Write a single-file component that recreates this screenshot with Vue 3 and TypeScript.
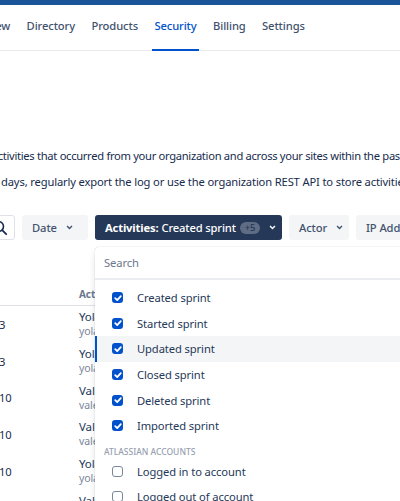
<script setup lang="ts">
const tabs = ['Overview', 'Directory', 'Products', 'Security', 'Billing', 'Settings']
const rows = [
  { date: '3', name: 'Yolanda', mail: 'yolanda@example' },
  { date: '3', name: 'Yolanda', mail: 'yolanda@example' },
  { date: '10', name: 'Valerie', mail: 'valerie@example' },
  { date: '10', name: 'Valerie', mail: 'valerie@example' },
  { date: '10', name: 'Yolanda', mail: 'yolanda@example' },
  { date: '10', name: 'Valerie', mail: 'valerie@example' },
]
const sprintItems = ['Created sprint', 'Started sprint', 'Updated sprint', 'Closed sprint', 'Deleted sprint', 'Imported sprint']
const accountItems = ['Logged in to account', 'Logged out of account']
</script>

<template>
  <div class="page">
    <div class="topbar"></div>
    <nav class="tabs">
      <a v-for="t in tabs" :key="t" class="tab" :class="{ active: t === 'Security' }">{{ t }}</a>
    </nav>
    <section class="intro">
      <p class="one">View the activities that occurred from your organization and across your sites within the past 180 days.</p>
      <p class="two">For 180 days, regularly export the log or use the organization REST API to store activities.</p>
    </section>
    <div class="filters">
      <button class="searchbtn">
        <svg width="16" height="16" viewBox="0 0 16 16"><circle cx="6.5" cy="6.5" r="5" fill="none" stroke="#172b4d" stroke-width="1.6" /><path d="M10.2 10.2l4 4" stroke="#172b4d" stroke-width="1.8" stroke-linecap="round" /></svg>
      </button>
      <button class="filter date">Date<svg class="chev" viewBox="0 0 10 6"><path d="M1.5 1l3.5 3.5L8.5 1" /></svg></button>
      <button class="filter dark"><b>Activities:</b> Created sprint<span class="count">+5</span><svg class="chev" viewBox="0 0 10 6"><path d="M1.5 1l3.5 3.5L8.5 1" /></svg></button>
      <button class="filter actor">Actor<svg class="chev" viewBox="0 0 10 6"><path d="M1.5 1l3.5 3.5L8.5 1" /></svg></button>
      <button class="filter ip">IP Address</button>
    </div>
    <div class="table">
      <div class="thead"><span>Activity</span></div>
      <div v-for="(r, i) in rows" :key="i" class="row">
        <span class="date-cell">{{ r.date }}</span>
        <div class="who">
          <div class="name">{{ r.name }}</div>
          <div class="mail">{{ r.mail }}</div>
        </div>
      </div>
    </div>
    <div class="menu">
      <div class="menu-search">Search</div>
      <div class="menu-list">
        <label v-for="s in sprintItems" :key="s" class="opt" :class="{ hover: s === 'Updated sprint' }">
          <span class="box on"><svg width="10" height="10" viewBox="0 0 10 10"><path d="M2.2 5.2l2 1.9 3.6-4" fill="none" stroke="#fff" stroke-width="1.8" stroke-linecap="round" stroke-linejoin="round" /></svg></span>
          {{ s }}
        </label>
        <div class="group">ATLASSIAN ACCOUNTS</div>
        <label v-for="s in accountItems" :key="s" class="opt">
          <span class="box"></span>
          {{ s }}
        </label>
      </div>
    </div>
  </div>
</template>

<style scoped>
.page {
  position: relative;
  width: 400px;
  height: 501px;
  overflow: hidden;
  background: #fff;
  font-family: "Noto Sans", "Open Sans", sans-serif;
  font-size: 11.2px;
  letter-spacing: -0.1px;
  color: #42526e;
}
.topbar {
  height: 5px;
  background: #1a5499;
}
.tabs {
  display: flex;
  gap: 16.4px;
  height: 45px;
  margin-left: -39px;
  border-bottom: 1px solid #ebecf0;
  font-weight: 500;
}
.tab {
  position: relative;
  padding-top: 13px;
  white-space: nowrap;
  color: #42526e;
}
.tab.active {
  color: #0052cc;
}
.tab.active::after {
  content: "";
  position: absolute;
  left: -2px;
  right: -2px;
  bottom: -1px;
  height: 2px;
  background: #0052cc;
}
.intro {
  margin-top: 97px;
  white-space: nowrap;
  color: #172b4d;
}
.intro p {
  margin: 0 0 10px;
  line-height: 16px;
}
.intro .one {
  margin-left: -53px;
  letter-spacing: -0.31px;
}
.intro .two {
  margin-left: -40px;
  letter-spacing: -0.15px;
}
.filters {
  display: flex;
  gap: 7px;
  height: 25px;
  margin: 25px 0 0 -20px;
  white-space: nowrap;
}
.filters button {
  display: flex;
  flex: none;
  align-items: center;
  height: 25px;
  padding: 0;
  border: none;
  border-radius: 3px;
  background: #f4f5f7;
  font: inherit;
  letter-spacing: inherit;
  font-weight: 500;
  color: #42526e;
}
.filters .searchbtn {
  width: 35px;
  justify-content: flex-end;
  padding-right: 6px;
  background: #fff;
  border: 1px solid #dfe1e6;
}
.filter {
  padding-left: 10px !important;
}
.date { width: 66px; }
.actor { width: 60px; }
.ip { width: 90px; }
.filters .dark {
  width: 187px;
  background: #253858;
  color: #fff;
  letter-spacing: -0.15px;
}
.dark b {
  margin-right: 3px;
  font-weight: 700;
}
.count {
  margin-left: 4px;
  padding: 0 5px;
  border-radius: 8px;
  background: #5e6c84;
  color: #253858;
  font-size: 9.5px;
  font-weight: 500;
  line-height: 12px;
}
.chev {
  width: 7px;
  height: 5px;
  margin-left: auto;
  margin-right: 6px;
  fill: none;
  stroke: currentColor;
  stroke-width: 2;
}
.date .chev {
  margin-right: 15px;
}
.table {
  margin-top: 47px;
  white-space: nowrap;
}
.thead {
  height: 18px;
  padding-left: 79px;
  border-bottom: 1px solid #dfe1e6;
  font-size: 10px;
  font-weight: 700;
  color: #6b778c;
}
.row {
  display: flex;
  align-items: center;
  height: 36.7px;
}
.date-cell {
  width: 79px;
  text-indent: -1px;
  color: #172b4d;
}
.name {
  font-size: 11.5px;
  line-height: 15px;
  color: #253858;
}
.mail {
  font-size: 10.5px;
  line-height: 15px;
  color: #7a869a;
}
.menu {
  position: absolute;
  left: 95px;
  top: 247px;
  width: 340px;
  height: 300px;
  border-radius: 4px;
  background: #fff;
  box-shadow: 0 0 1px rgba(9, 30, 66, 0.31), 0 4px 8px -2px rgba(9, 30, 66, 0.2);
}
.menu-search {
  height: 33px;
  padding: 8px 0 0 9px;
  box-sizing: border-box;
  border-bottom: 2px solid #ebecf0;
  color: #6b778c;
  line-height: 16px;
}
.menu-list {
  padding-top: 5px;
}
.opt {
  display: flex;
  align-items: center;
  gap: 14px;
  box-sizing: border-box;
  height: 25.6px;
  padding-left: 17px;
  white-space: nowrap;
  color: #253858;
}
.opt.hover {
  background: #f4f5f7;
  box-shadow: inset 2px 0 0 #0052cc;
}
.box {
  display: flex;
  flex: none;
  align-items: center;
  justify-content: center;
  box-sizing: border-box;
  width: 11px;
  height: 11px;
  border: 1.5px solid #7a869a;
  border-radius: 3px;
  background: #fff;
}
.box.on {
  border: none;
  background: #0052cc;
}
.group {
  padding: 7px 0 0 9px;
  height: 20px;
  box-sizing: border-box;
  font-size: 8.5px;
  letter-spacing: 0;
  font-weight: 500;
  line-height: 12px;
  color: #97a0af;
}
</style>

<style>
html, body { margin: 0; }
</style>
